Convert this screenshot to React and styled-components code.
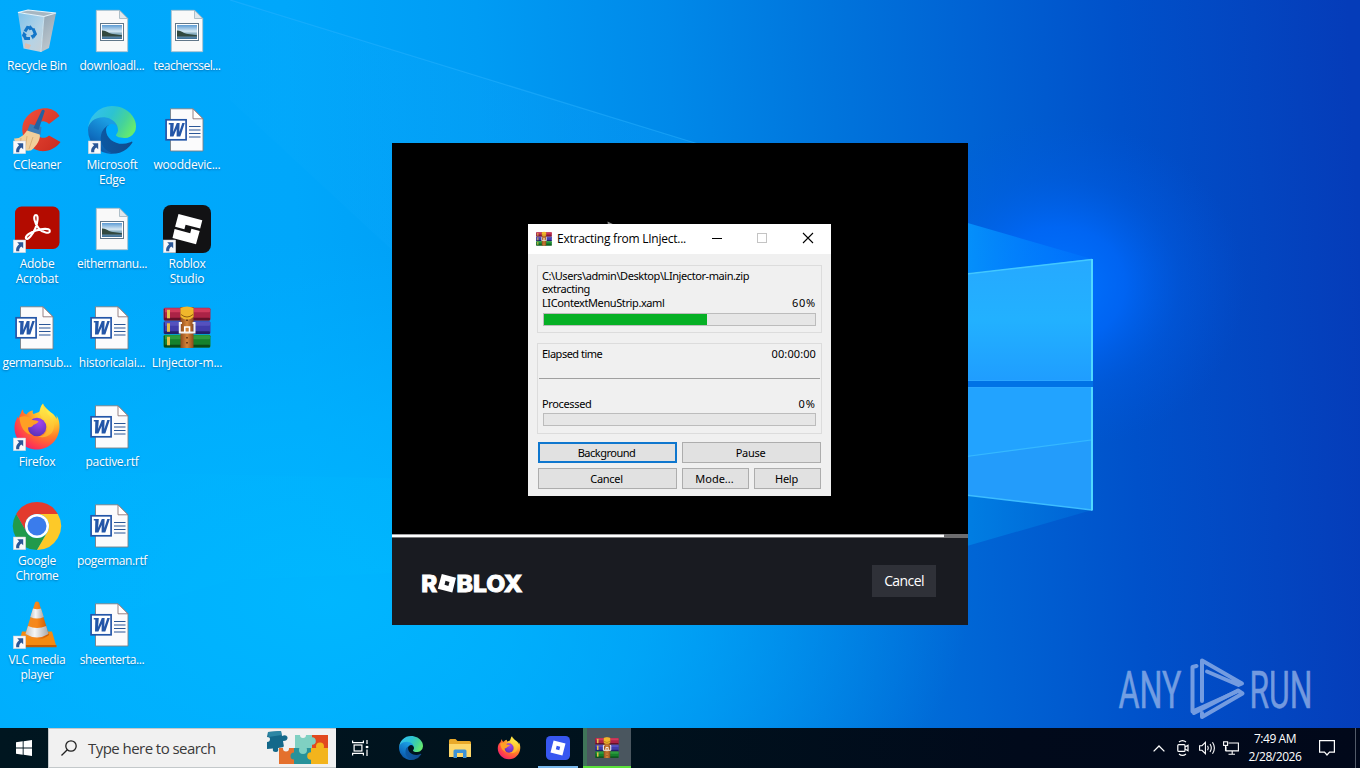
import React from "react";
import styled, { createGlobalStyle, css } from "styled-components";

const GlobalStyle = createGlobalStyle`
  *, *::before, *::after { box-sizing: border-box; }
  html, body { margin: 0; padding: 0; overflow: hidden; }
  body { font-family: "Open Sans", "Noto Sans", sans-serif; font-size: 12px; color: #000; }
  svg { display: block; overflow: visible; }
  button { font: inherit; color: inherit; padding: 0; margin: 0; cursor: default; }
`;

/* ---------- page ---------- */

const Screen = styled.div`
  position: relative;
  display: flex;
  flex-direction: column;
  width: 1360px;
  height: 768px;
  overflow: hidden;
  background: #00aafc;
`;

const WallpaperLayer = styled.svg`
  position: absolute;
  top: 0;
  left: 0;
`;

const Desktop = styled.main`
  position: relative;
  flex: 1;
  min-height: 0;
`;

/* ---------- desktop shortcuts ---------- */

const ShortcutColumns = styled.div`
  display: flex;
  gap: 1px;
`;

const ShortcutColumn = styled.div`
  display: flex;
  flex-direction: column;
`;

const ShortcutCell = styled.div`
  display: flex;
  flex-direction: column;
  align-items: center;
  width: 74px;
  height: 99px;
  padding-top: 7px;
`;

const IconFrame = styled.div`
  width: 48px;
  height: 48px;
  margin-bottom: 3px;
`;

const ShortcutLine = styled.span`
  height: 15px;
  line-height: 15px;
  font-size: 12px;
  letter-spacing: ${(p) => p.$track ?? -0.1}px;
  white-space: nowrap;
  color: #fff;
  text-shadow: 0 1px 2px rgba(0, 30, 80, 0.45);
`;

/* ---------- installer window ---------- */

const InstallerWindow = styled.section`
  position: absolute;
  left: 392px;
  top: 143px;
  display: flex;
  flex-direction: column;
  width: 576px;
  height: 482px;
  background: #000;
`;

const InstallerStage = styled.div`
  flex: 1;
`;

const CursorTip = styled.svg`
  position: absolute;
  left: 215px;
  top: 78px;
`;

const InstallerProgress = styled.div`
  height: 4px;
  padding: 1px 0;
  background: #6d6d6f;
`;

const InstallerProgressFill = styled.div`
  height: 2px;
  background: #fff;
  box-shadow: 0 -1px 0 #a2a2a4, 0 1px 0 #77787a;
`;

const InstallerFooter = styled.footer`
  display: flex;
  justify-content: space-between;
  align-items: flex-start;
  height: 87px;
  padding: 27px 32px 0 30px;
  background: #191b21;
`;

const WordmarkFrame = styled.div`
  padding-top: 9px;
`;

const InstallerButton = styled.button`
  width: 64px;
  height: 32px;
  border: 0;
  background: #2f3138;
  color: #fff;
  font-size: 14px;
  line-height: 32px;
  letter-spacing: -0.6px;
`;

/* ---------- extraction dialog ---------- */

const Dialog = styled.section`
  position: absolute;
  left: 528px;
  top: 224px;
  display: flex;
  flex-direction: column;
  width: 303px;
  height: 272px;
  background: #f0f0f0;
  font-family: "Noto Sans", "Open Sans", sans-serif;
`;

const TitleBar = styled.header`
  display: flex;
  align-items: center;
  height: 30px;
  padding-left: 8px;
  background: #fff;
`;

const DialogTitle = styled.h1`
  flex: 1;
  margin: 0 0 0 5px;
  font-family: "Open Sans", sans-serif;
  font-size: 12px;
  font-weight: 400;
  line-height: 30px;
  white-space: nowrap;
  letter-spacing: -0.25px;
`;

const CaptionButton = styled.button`
  display: flex;
  align-items: center;
  justify-content: center;
  width: 46px;
  height: 30px;
  border: 0;
  background: transparent;
`;

const DialogBody = styled.div`
  display: flex;
  flex-direction: column;
  padding: 11px 9px 0;
`;

const Group = styled.div`
  display: flex;
  flex-direction: column;
  border: 1px solid #dcdcdc;
  height: ${(p) => p.$height}px;
  margin-bottom: ${(p) => p.$after}px;
  padding: ${(p) => p.$top}px 5px 0 4px;
`;

const TextRow = styled.div`
  display: flex;
  justify-content: space-between;
  height: ${(p) => p.$height || 13}px;
  font-size: 11px;
  line-height: 14px;
  white-space: nowrap;
  letter-spacing: ${(p) => p.$track ?? -0.4}px;
`;

const Figure = styled.span`
  letter-spacing: ${(p) => p.$track ?? 0.2}px;
`;

const Meter = styled.div`
  height: 13px;
  margin: ${(p) => p.$gap}px 0 0 1px;
  border: 1px solid #bcbcbc;
  background: #e6e6e6;
`;

const MeterFill = styled.div`
  height: 11px;
  background: #06b025;
`;

const Rule = styled.div`
  height: 1px;
  margin: 17px -4px 18px -3px;
  background: #a0a0a0;
`;

const ButtonRow = styled.div`
  display: flex;
  gap: 5px;
  margin: 0 1px 5px;
`;

const DialogButton = styled.button`
  width: ${(p) => p.$width}px;
  height: 21px;
  border: 1px solid #adadad;
  background: #e1e1e1;
  font-size: 11px;
  line-height: 18px;
  padding: 1px 2px 0 0;
  letter-spacing: ${(p) => p.$track ?? -0.3}px;
  ${(p) =>
    p.$focused &&
    css`
      border: 2px solid #0f77ce;
      line-height: 16px;
    `}
`;

/* ---------- watermark ---------- */

const Watermark = styled.svg`
  position: absolute;
  left: 1110px;
  top: 650px;
`;

/* ---------- taskbar ---------- */

const Taskbar = styled.nav`
  position: relative;
  display: flex;
  height: 40px;
  background: linear-gradient(90deg, #001620 0%, #00121d 45%, #010a1b 75%, #01081a 100%);
  color: #fff;
`;

const TaskButton = styled.button`
  display: flex;
  align-items: center;
  justify-content: center;
  width: ${(p) => p.$width || 49}px;
  height: 40px;
  margin-right: ${(p) => p.$after || 0}px;
  border: 0;
  background: transparent;
  ${(p) =>
    p.$state === "running" &&
    css`
      box-shadow: inset 0 -2px 0 #78b8ec;
      width: 40px;
      margin: 0 5px 0 5px;
    `}
  ${(p) =>
    p.$state === "loading" &&
    css`
      background: linear-gradient(90deg, #3f7559 0 4px, #4a565f 4px);
      box-shadow: inset 0 -2px 0 #5be23b;
    `}
`;

const SearchBox = styled.div`
  display: flex;
  align-items: center;
  width: 288px;
  height: 40px;
  padding: 0 7px 0 12px;
  border: 1px solid #c3c8ca;
  border-width: 1px 0 1px 1px;
  background: #f1f1f1;
  color: #3a3a3a;
`;

const SearchText = styled.span`
  flex: 1;
  margin-left: 11px;
  font-size: 15px;
  letter-spacing: -0.55px;
  white-space: nowrap;
`;

const Tray = styled.div`
  display: flex;
  align-items: center;
  margin-left: auto;
`;

const TrayIcon = styled.div`
  display: flex;
  align-items: center;
  justify-content: center;
  width: 24px;
  height: 40px;
`;

const Clock = styled.div`
  display: flex;
  flex-direction: column;
  align-items: center;
  width: 64px;
  font-size: 12px;
  line-height: 18px;
  letter-spacing: -0.45px;
  white-space: nowrap;
`;

const Notifications = styled.div`
  display: flex;
  align-items: center;
  justify-content: center;
  width: 40px;
  margin-right: 8px;
`;

const ShowDesktop = styled.div`
  width: 5px;
  height: 40px;
  border-left: 1px solid #535b69;
`;

/* ---------- wallpaper ---------- */

function Wallpaper() {
  return (
    <WallpaperLayer width="1360" height="768" viewBox="0 0 1360 768">
      <defs>
        <linearGradient id="wpBase" gradientUnits="userSpaceOnUse" x1="0" y1="330" x2="1360" y2="270">
          <stop offset="0" stopColor="#00aafc" />
          <stop offset="0.22" stopColor="#00a7fb" />
          <stop offset="0.36" stopColor="#009cf4" />
          <stop offset="0.5" stopColor="#0089e9" />
          <stop offset="0.62" stopColor="#0074dc" />
          <stop offset="0.72" stopColor="#0063d4" />
          <stop offset="0.83" stopColor="#0051ca" />
          <stop offset="0.93" stopColor="#0345c0" />
          <stop offset="1" stopColor="#053cb9" />
        </linearGradient>
        <radialGradient id="wpLow" gradientUnits="userSpaceOnUse" cx="0" cy="0" r="1" gradientTransform="translate(330 600) scale(640 360)">
          <stop offset="0" stopColor="#00b8ff" stopOpacity="0.9" />
          <stop offset="0.5" stopColor="#00b4ff" stopOpacity="0.6" />
          <stop offset="1" stopColor="#00b0ff" stopOpacity="0" />
        </radialGradient>
        <radialGradient id="wpGlow" gradientUnits="userSpaceOnUse" cx="0" cy="0" r="1" gradientTransform="translate(1060 285) scale(185 165)">
          <stop offset="0" stopColor="#0074ff" />
          <stop offset="0.35" stopColor="#006aff" stopOpacity="0.75" />
          <stop offset="0.65" stopColor="#005feb" stopOpacity="0.35" />
          <stop offset="1" stopColor="#0058e0" stopOpacity="0" />
        </radialGradient>
        <linearGradient id="wpBeam" gradientUnits="userSpaceOnUse" x1="240" y1="0" x2="1090" y2="0">
          <stop offset="0" stopColor="#20b4ff" stopOpacity="0.06" />
          <stop offset="0.5" stopColor="#10a4ff" stopOpacity="0.2" />
          <stop offset="0.86" stopColor="#0596ff" stopOpacity="0.85" />
          <stop offset="1" stopColor="#0078ff" stopOpacity="0.4" />
        </linearGradient>
        <linearGradient id="wpBeamLow" gradientUnits="userSpaceOnUse" x1="0" y1="0" x2="1090" y2="0">
          <stop offset="0" stopColor="#00c0ff" stopOpacity="0" />
          <stop offset="0.35" stopColor="#00c0ff" stopOpacity="0.15" />
          <stop offset="0.88" stopColor="#0088e8" stopOpacity="0.75" />
          <stop offset="1" stopColor="#0070dc" stopOpacity="0.5" />
        </linearGradient>
        <linearGradient id="wpPaneTop" x1="0" y1="0" x2="0" y2="1">
          <stop offset="0" stopColor="#26a9ff" />
          <stop offset="0.5" stopColor="#22b1ff" />
          <stop offset="1" stopColor="#1f9dff" />
        </linearGradient>
      </defs>
      <rect width="1360" height="768" fill="url(#wpBase)" />
      <rect width="1360" height="768" fill="url(#wpLow)" />
      <rect x="850" y="80" width="450" height="450" fill="url(#wpGlow)" />
      <path d="M230 0 L695 143 L940 173 L1092 259 L960 274 L392 250 L230 100Z" fill="url(#wpBeam)" opacity="0" />
      <path d="M230 0 L695 143 L940 215 L1092 259 L960 274 L392 250 L230 100Z" fill="url(#wpBeam)" />
      <path d="M230 0 L695 143 L968 223" fill="none" stroke="#2cb4ff" strokeOpacity="0.45" strokeWidth="1.3" />
      <path d="M1092 510 L960 548 L230 580 L0 650 V470 L960 490Z" fill="url(#wpBeamLow)" />
      <path d="M940 277 L1092 259 V381 H940Z" fill="url(#wpPaneTop)" />
      <path d="M940 387 H1092 V510 L940 492Z" fill="#239cfb" />
      <path d="M940 387 H1092 V441 L940 460Z" fill="#22a3ff" />
      <rect x="940" y="381" width="153" height="6" fill="#0072e6" />
      <path d="M940 277 L1092 259.5" stroke="#42c8ff" strokeWidth="1.4" />
      <path d="M940 460 L1091 440" stroke="#36b8ff" strokeWidth="1.2" />
      <path d="M940 492 L1092 510" stroke="#3dbdff" strokeWidth="1.4" />
      <path d="M940 387.5 H1092 M940 380.5 H1092" stroke="#2ba6ff" />
      <path d="M1092 259 V381 M1092 387 V510.5" stroke="#50d8ff" strokeWidth="2" />
    </WallpaperLayer>
  );
}

/* ---------- icons ---------- */

const Svg48 = ({ size = 48, children }) => (
  <svg width={size} height={size} viewBox="0 0 48 48">
    {children}
  </svg>
);

const LinkBadge = () => (
  <g>
    <rect x="0.3" y="35" width="12.4" height="12.7" fill="#f8f9fb" stroke="#c8ccd4" strokeWidth="0.5" />
    <path d="M4.2 37.3 H10.2 V43.3 L8.3 41.5 C6.5 43 6 44.3 6.3 46.2 H3.2 C2.7 43.2 4 41 6.1 39.3Z" fill="#2b5797" />
  </g>
);

const RecycleBin = () => (
  <Svg48>
    <defs>
      <linearGradient id="binL" x1="0" y1="0" x2="1" y2="1">
        <stop offset="0" stopColor="#7fc2ea" />
        <stop offset="0.6" stopColor="#b4d3e6" />
        <stop offset="1" stopColor="#c9cfd4" />
      </linearGradient>
      <linearGradient id="binR" x1="0" y1="0" x2="0.4" y2="1">
        <stop offset="0" stopColor="#8ea3b3" />
        <stop offset="1" stopColor="#bfc8ce" />
      </linearGradient>
    </defs>
    <path d="M5 6 L31 9 L28 45 L10.5 41.5Z" fill="url(#binL)" />
    <path d="M31 9 L43 6 L36 41 L28 45Z" fill="url(#binR)" />
    <path d="M5 5.5 L15 3 L43 6 L31 9.5Z" fill="#a7b7c2" />
    <path d="M5 5.5 L15 3 L43 6 L31 9.5Z" fill="none" stroke="#e6f3fa" strokeWidth="1.2" />
    <path d="M31 9 L28 45" stroke="#dce9f0" strokeWidth="0.8" />
    <path d="M12 36 l6 2 -2 4 -4 -1z" fill="#efb79a" opacity="0.7" />
    <g fill="none" stroke="#1476c8" strokeWidth="3.1">
      <path d="M12 24.5 L14.5 20.5 L18 21" />
      <path d="M20 21.5 L22.3 27 L20 30" />
      <path d="M17 31.5 H12.5 L10.5 27" />
    </g>
    <path d="M17 18 l4 4.2 -5 1z M22 27 l-2 5.5 -2.5 -4z M9 29.5 l1.5 -5 3.5 3.5z" fill="#1476c8" />
  </Svg48>
);

const PictureFile = () => (
  <Svg48>
    <defs>
      <linearGradient id="picSky" x1="0" y1="0" x2="0" y2="1">
        <stop offset="0" stopColor="#5c9bd4" />
        <stop offset="0.45" stopColor="#d6e8f3" />
        <stop offset="0.6" stopColor="#8fb3c4" />
        <stop offset="1" stopColor="#3b6c94" />
      </linearGradient>
    </defs>
    <path d="M8.3 3.3 H31.5 L39.7 11.5 V44.7 H8.3Z" fill="#f9f9f9" stroke="#a9bac4" strokeWidth="0.8" />
    <path d="M31.5 3.3 V11.5 H39.7Z" fill="#dfe7ec" stroke="#9eb2be" strokeWidth="0.8" />
    <rect x="12.5" y="16.5" width="23" height="17" fill="#fff" stroke="#61778a" />
    <rect x="14" y="18" width="20" height="14" fill="url(#picSky)" />
    <path d="M14 23.5 C18 23 20 26.5 25 27 L34 28.3 V29.5 H14Z" fill="#32493f" />
  </Svg48>
);

const WordFile = () => (
  <Svg48>
    <path d="M7.5 2.8 H30 L40 12.8 V45 H7.5Z" fill="#fbfbfc" stroke="#7b7f86" strokeWidth="0.9" />
    <path d="M30 2.8 V12.8 H40Z" fill="#fff" stroke="#8a7477" strokeWidth="0.9" />
    <g stroke="#2b5797" strokeWidth="1.1">
      <path d="M26 20.5 H37.5 M26 24 H37.5 M26 27.5 H37.5 M26 31 H37.5" />
    </g>
    <rect x="3.1" y="13.8" width="20" height="20" fill="#fff" stroke="#2456a8" strokeWidth="1.7" />
    <path d="M5.8 17 H10.8 L10.1 26 L13.8 17 H16.6 L16.3 26 L19.3 17 H21.8 L17.3 30.5 H13.6 L13.7 23 L10.4 30.5 H7 L7.3 18.5 H5.8Z" fill="#2456a8" />
  </Svg48>
);

const CCleaner = () => (
  <Svg48>
    <defs>
      <linearGradient id="ccRed" x1="0" y1="0" x2="1" y2="1">
        <stop offset="0" stopColor="#f0503c" />
        <stop offset="1" stopColor="#c92a1e" />
      </linearGradient>
    </defs>
    <path d="M46.5 10 C43 4 36 1.500 29 2.500 C19 4 11 11 9.500 20 A22 22 0 0 0 27 45 C36 46 43 42 47.500 36 L36 29.500 C31 34.500 23 31 22.500 24 C22.500 16 30.500 12.500 36 18Z" fill="url(#ccRed)" />
    <path d="M17 18 L28.5 21 L27.5 29 L14 25.5Z" fill="#3d7db5" />
    <path d="M29 4 q1.8 -1 2.8 1 L25.5 24 L20.5 22Z" fill="#2561a0" />
    <path d="M14 24.5 L26.7 28.5 C28 32 24 40 18 44.5 C9 45.500 3 41 1 32.500 C7 33 11 29 14 24.500Z" fill="#f1cf9b" />
    <path d="M8 32 L7 41 M14 30 L12 44 M20 31 L16 43" stroke="#dbb078" strokeWidth="1" fill="none" />
    <LinkBadge />
  </Svg48>
);

const EdgeGlyph = ({ size = 48, linked }) => (
  <Svg48 size={size}>
    <defs>
      <linearGradient id="edgeA" x1="0" y1="0.5" x2="1" y2="0.5">
        <stop offset="0" stopColor="#0c59a4" />
        <stop offset="1" stopColor="#114a8b" />
      </linearGradient>
      <linearGradient id="edgeB" x1="0.7" y1="0.2" x2="0.3" y2="1">
        <stop offset="0" stopColor="#1b9de2" />
        <stop offset="0.6" stopColor="#0f6fc0" />
        <stop offset="1" stopColor="#0a4f9c" />
      </linearGradient>
      <linearGradient id="edgeC" x1="0" y1="0.2" x2="1" y2="0.6">
        <stop offset="0" stopColor="#35c1f1" />
        <stop offset="0.45" stopColor="#2cc3d2" />
        <stop offset="0.75" stopColor="#45d39a" />
        <stop offset="1" stopColor="#66eb6e" />
      </linearGradient>
    </defs>
    <g transform="scale(0.1875) translate(-4.63 -4.92)">
      <path fill="url(#edgeA)" d="M235.68 195.46a93.73 93.73 0 0 1-10.54 4.71 101.87 101.87 0 0 1-35.9 6.46c-47.32 0-88.54-32.55-88.54-74.32A31.48 31.48 0 0 1 117.13 105c-42.8 1.8-53.8 46.4-53.8 72.53 0 73.88 68.09 81.37 82.76 81.37 7.91 0 19.84-2.3 27-4.56l1.31-.44A128.34 128.34 0 0 0 241 201.1a4 4 0 0 0-5.32-5.64z" />
      <path fill="url(#edgeB)" d="M110.34 246.34A79.2 79.2 0 0 1 87.6 225a80.72 80.72 0 0 1 29.53-120c3.12-1.47 8.45-4.13 15.54-4a32.35 32.35 0 0 1 25.69 13 31.88 31.88 0 0 1 6.36 18.66c0-.21 24.46-79.6-80-79.6-43.9 0-80 41.66-80 78.21a130.15 130.15 0 0 0 12.11 56 128 128 0 0 0 156.38 67.11 75.55 75.55 0 0 1-62.78-8z" />
      <path fill="url(#edgeC)" d="M156.94 153.78c-.81 1.05-3.3 2.5-3.3 5.66 0 2.61 1.7 5.12 4.72 7.23 14.38 10 41.49 8.68 41.56 8.68a59.56 59.56 0 0 0 30.27-8.35A61.38 61.38 0 0 0 260.63 114c.26-22.41-8-37.31-11.34-43.91C228.09 28.76 182.35 5 132.63 5a128 128 0 0 0-128 126.2c.48-36.54 36.8-66.05 80-66.05 3.5 0 23.46.34 42 10.07 16.34 8.58 24.9 18.94 30.85 29.21 6.18 10.67 7.28 24.15 7.28 29.52s-2.74 13.33-7.82 19.83z" />
    </g>
    {linked && <LinkBadge />}
  </Svg48>
);

const Acrobat = () => (
  <Svg48>
    <rect x="2" y="1.5" width="44.5" height="42.5" rx="6.5" fill="#b30b00" />
    <path d="M23 10 C19.6 10 21.3 18.5 26 23.7 C29.5 27.6 36.8 29.4 36.8 26 C36.8 22.7 28.5 23.8 23 25.5 C17.5 27.2 11.8 31 13 33.5 C14.5 36 20 29 22.3 23.5 C24.6 18 25.8 10 23 10Z" fill="none" stroke="#fff" strokeWidth="2.1" />
    <LinkBadge />
  </Svg48>
);

const RobloxStudio = () => (
  <Svg48>
    <rect width="48" height="48" rx="8" fill="#121214" />
    <path d="M15.5 9 L39.3 15.3 L37.2 23.6 L22.6 19.7 L21.4 24.2 L12.1 21.8Z" fill="#fff" />
    <path d="M11.6 24 L27.2 28.2 L28.4 23.8 L36.7 26 L33 39.3 L9.5 33Z" fill="#fff" />
    <LinkBadge />
  </Svg48>
);

const Book = ({ y, light, mid, dark }) => (
  <g>
    <rect x="0.5" y={y} width="47" height="12.8" rx="1.5" fill={mid} />
    <rect x="1" y={y + 0.5} width="46" height="4" rx="1" fill={light} />
    <rect x="1" y={y + 10} width="46" height="2.8" rx="1" fill={dark} />
    <rect x="4" y={y + 2} width="3" height="8.5" fill="#e5c04a" />
    <path d={`M1.5 ${y + 1} v11`} stroke={dark} strokeWidth="0.8" />
  </g>
);

const WinRar = ({ size = 48 }) => (
  <Svg48 size={size}>
    <defs>
      <linearGradient id="rarBelt" x1="0" y1="0" x2="1" y2="0">
        <stop offset="0" stopColor="#8e4b1d" />
        <stop offset="0.5" stopColor="#d8863a" />
        <stop offset="1" stopColor="#8c4a1c" />
      </linearGradient>
    </defs>
    <Book y={3.8} light="#d03a5c" mid="#ab2346" dark="#651029" />
    <Book y={17.3} light="#5551be" mid="#403cab" dark="#22206b" />
    <Book y={30.8} light="#2c9c3e" mid="#15812c" dark="#0a4a19" />
    <rect x="17.5" y="3" width="13" height="41" fill="url(#rarBelt)" />
    <path d="M17.5 4 Q24 1 30.5 4 V13 Q24 18.5 17.5 13Z" fill="#f0b72b" />
    <path d="M18 10.5 Q24 15.5 30 10.5" fill="none" stroke="#93600f" />
    <path d="M24 15.5 v1.5 M24 33 v1.5 M24 38 v1.5" stroke="#53290d" strokeWidth="1.5" />
    <path d="M19 19 H16.8 V28.5 H31.5 V19 H29.5" fill="none" stroke="#f2f2f0" strokeWidth="2" />
    <path d="M21.8 28 V23 H26.5 V28" fill="none" stroke="#fff" strokeWidth="1.6" />
  </Svg48>
);

const FirefoxGlyph = ({ size = 48, linked }) => (
  <Svg48 size={size}>
    <defs>
      <radialGradient id="ffBody" cx="0.8" cy="0.15" r="1.05">
        <stop offset="0" stopColor="#fff24d" />
        <stop offset="0.3" stopColor="#ffc52e" />
        <stop offset="0.55" stopColor="#ff7c28" />
        <stop offset="0.8" stopColor="#ff3c4e" />
        <stop offset="1" stopColor="#e4147c" />
      </radialGradient>
      <radialGradient id="ffCore" cx="0.6" cy="0.25" r="0.8">
        <stop offset="0" stopColor="#a544ee" />
        <stop offset="1" stopColor="#5732b5" />
      </radialGradient>
      <linearGradient id="ffFlame" x1="0" y1="0" x2="0" y2="1">
        <stop offset="0" stopColor="#fff04a" />
        <stop offset="1" stopColor="#ffb02c" />
      </linearGradient>
    </defs>
    <path d="M8 10 C8 8.5 9 7 10 6.5 C10 9 11 11 13.5 11.5 C15 9 18 7.5 20 7.5 C19.5 9 19.5 10 20.5 11 L26 9 C29 6 27.5 3 30 0.5 C31 3.5 34.5 6.5 38 9.5 C41 11 43.5 15 43.5 16 C44 14.5 43.5 12.5 43.3 12 C46 16 46.7 20 46.5 24.5 C46 37 36 46.5 24 46.5 C11 46.5 1.5 36.5 1.5 24.5 C1.5 18.5 4 15.5 5 13 C5.2 15 5.5 15 6 15 C6 13 7 12 8 10Z" fill="url(#ffBody)" />
    <circle cx="24" cy="24" r="9.3" fill="url(#ffCore)" />
    <path d="M29.5 1 C26 6 26 10 28 13 C30.5 16 35 18 34.5 25 C34 30 30 33.5 25 33.5 C32 36 41 32 41 23 C41 15 34 12 31.5 7 C30.5 5 30 3 29.5 1Z" fill="url(#ffFlame)" opacity="0.9" />
    <path d="M6.5 14.5 C11 12 17 14 19.5 17 C22 17.5 25 17.5 25.5 18.5 C25.2 20 22 21.5 20.5 21.8 C19.5 24 17 24.5 15.3 24.3 C14.5 28 17 31 19 32 C12 31 7 24 6.5 14.5Z" fill="#ff9f24" />
    {linked && <LinkBadge />}
  </Svg48>
);

const Chrome = () => (
  <Svg48>
    <path d="M3.2 12 A24 24 0 0 0 24 48 L34.4 30 A12 12 0 0 1 13.6 30Z" fill="#219a4b" />
    <path d="M24 48 A24 24 0 0 0 44.8 12 H24 A12 12 0 0 1 34.4 30Z" fill="#fdc928" />
    <path d="M3.2 12 A24 24 0 0 1 44.8 12 H24 A12 12 0 0 0 13.6 30Z" fill="#e33b2e" />
    <circle cx="24" cy="24" r="12" fill="#fff" />
    <circle cx="24" cy="24" r="9.5" fill="#3a7cec" />
    <LinkBadge />
  </Svg48>
);

const Vlc = () => (
  <Svg48>
    <defs>
      <linearGradient id="vlcO" x1="0" y1="0" x2="1" y2="0">
        <stop offset="0" stopColor="#f08a20" />
        <stop offset="0.5" stopColor="#f7871a" />
        <stop offset="1" stopColor="#c95600" />
      </linearGradient>
      <linearGradient id="vlcW" x1="0" y1="0" x2="1" y2="0">
        <stop offset="0" stopColor="#c4c4c4" />
        <stop offset="0.4" stopColor="#f6f6f6" />
        <stop offset="1" stopColor="#a8a8a8" />
      </linearGradient>
    </defs>
    <path d="M9 30.5 H39 L43.5 46 H5Z" fill="#f58a10" />
    <path d="M5 44 H43.5 V46.3 H5Z" fill="#c55c00" />
    <path d="M22 1.5 Q24 -0.5 26 1.5 L36 34 Q24 43 12 34Z" fill="url(#vlcO)" />
    <path d="M20 7.5 Q24 9 28 7.5 L30.8 16 Q24 19 17.3 16Z" fill="url(#vlcW)" />
    <path d="M15 25 Q24 29 33.2 25 L35.5 33 Q24 40 12.5 33Z" fill="url(#vlcW)" />
    <LinkBadge />
  </Svg48>
);

const FolderGlyph = () => (
  <svg width="22" height="19" viewBox="0 0 22 19">
    <path d="M0 1.5 Q0 0 1.5 0 H6.5 L8.5 2 H20.5 Q22 2 22 3.5 V18 H0Z" fill="#e9a92a" />
    <path d="M0 5 H22 V18 H0Z" fill="#fed76a" />
    <path d="M4.5 19 V12 Q4.5 10.5 6 10.5 H16 Q17.5 10.5 17.5 12 V19 H14 V14 H8 V19Z" fill="#3b92d8" />
  </svg>
);

const RobloxTile = () => (
  <svg width="24" height="24" viewBox="0 0 24 24">
    <rect width="24" height="24" rx="4.5" fill="#3757f0" />
    <path fillRule="evenodd" d="M7.6 4.5 L19.5 7.6 L16.4 19.5 L4.5 16.4Z M10.7 9.8 L9.8 13.3 L13.3 14.2 L14.2 10.7Z" fill="#fff" />
  </svg>
);

const WindowsGlyph = () => (
  <svg width="16" height="16" viewBox="0 0 16 16" fill="#fff">
    <path d="M0 2.3 L6.7 1.3 V7.6 H0Z M7.6 1.2 L16 0 V7.6 H7.6Z M0 8.4 H6.7 V14.7 L0 13.7Z M7.6 8.4 H16 V16 L7.6 14.8Z" />
  </svg>
);

const SearchGlyph = () => (
  <svg width="16" height="16" viewBox="0 0 16 16" fill="none" stroke="#222" strokeWidth="1.3">
    <circle cx="10" cy="6" r="5.2" />
    <path d="M6.3 9.7 L0.5 15.5" />
  </svg>
);

const TaskViewGlyph = () => (
  <svg width="17" height="16" viewBox="0 0 17 16" fill="none" stroke="#fff" strokeWidth="1.2">
    <path d="M0.6 0.5 V2.6 H11.4 V0.5 M0.6 15.5 V13.4 H11.4 V15.5" />
    <rect x="2.1" y="5" width="7.8" height="6" />
    <path d="M15 0 V4 M15 9.5 V16" />
    <path d="M13.8 7 H16.3" strokeWidth="2.2" />
  </svg>
);

const PuzzleArt = () => (
  <svg width="63" height="36" viewBox="0 0 63 36">
    <path d="M2 2 L15 1 L16 6 Q20 4 21.5 7 Q22 11 17 11 L18 17 L12 18 Q13 22 10 22 Q6 22 7 18.5 L1 19 L1 12 Q4 12 4 9 Q4 7 1 7Z" fill="#13688a" />
    <path d="M2 2 L15 1 L15.5 5 L2.5 7Z" fill="#2c86a4" />
    <rect x="13" y="18" width="16" height="16" fill="#e4702d" />
    <rect x="29" y="5" width="17" height="14" fill="#7fd0c2" />
    <rect x="46" y="5" width="16" height="14" fill="#e2491f" />
    <rect x="28" y="18" width="18" height="16" fill="#28929a" />
    <rect x="45" y="18" width="17" height="16" fill="#f3b41c" />
    <circle cx="37" cy="20" r="4" fill="#7fd0c2" />
    <circle cx="46" cy="11" r="3.8" fill="#7fd0c2" />
    <circle cx="54" cy="16.5" r="4" fill="#f3b41c" />
    <circle cx="45" cy="26" r="3.8" fill="#f3b41c" />
    <circle cx="28" cy="26" r="3.5" fill="#28929a" />
    <circle cx="20" cy="18.5" r="3" fill="#f1f1f1" />
    <circle cx="37" cy="5" r="3" fill="#f1f1f1" />
  </svg>
);

const ChevronUp = () => (
  <svg width="12" height="7" viewBox="0 0 12 7" fill="none" stroke="#fff" strokeWidth="1.3">
    <path d="M0.6 6.4 L6 1 L11.4 6.4" />
  </svg>
);

const MeetNow = () => (
  <svg width="12" height="16" viewBox="0 0 12 16" fill="none" stroke="#fff" strokeWidth="1.2">
    <rect x="0.8" y="4.6" width="7.2" height="6.8" rx="1" />
    <path d="M8 7 L11 5.3 V10.7 L8 9" />
    <path d="M2 2 Q5.5 -0.8 9 2 M2 14 Q5.5 16.8 9 14" />
  </svg>
);

const Speaker = () => (
  <svg width="17" height="14" viewBox="0 0 17 14" fill="none" stroke="#fff" strokeWidth="1.1">
    <path d="M0.6 4.7 H3 L6.4 1.3 V12.7 L3 9.3 H0.6Z" />
    <path d="M8.6 4.8 Q10 7 8.6 9.2 M11 3 Q13.6 7 11 11 M13.5 1.2 Q17.3 7 13.5 12.8" />
  </svg>
);

const Network = () => (
  <svg width="16" height="14" viewBox="0 0 16 14" fill="none" stroke="#fff" strokeWidth="1.1">
    <path d="M5.5 2 H15.4 V9.9 H3 V5.5 M9.2 9.9 V13 M5.5 13.2 H12" />
    <rect x="0.6" y="0.8" width="4" height="3.6" />
    <path d="M2.5 4.4 V9.9" />
  </svg>
);

const NoticeGlyph = () => (
  <svg width="16" height="16" viewBox="0 0 16 16" fill="none" stroke="#fff" strokeWidth="1.2">
    <path d="M0.6 0.6 H15.4 V12.2 H10.5 L8 15 L5.5 12.2 H0.6Z" />
  </svg>
);

const RobloxWordmark = () => (
  <svg width="102" height="20" viewBox="0 0 102 20" fill="#fff">
    <g fontFamily="Inter, sans-serif" fontWeight="800" fontSize="22.5" stroke="#fff" strokeWidth="0.9">
      <text x="-0.8" y="17.5" textLength="16" lengthAdjust="spacingAndGlyphs">R</text>
      <text x="34.5" y="17.5" textLength="66" lengthAdjust="spacingAndGlyphs">BLOX</text>
    </g>
    <path fillRule="evenodd" d="M19.8 0 L34 3.8 L30.3 18.5 L15.8 14.7Z M23.5 6.8 L22.5 10.8 L26.4 11.9 L27.5 7.9Z" />
  </svg>
);

/* ---------- content ---------- */

const columns = [
  [
    { icon: <RecycleBin />, lines: [["Recycle Bin", -0.25]] },
    { icon: <CCleaner />, lines: [["CCleaner", -0.3]] },
    { icon: <Acrobat />, lines: [["Adobe", -0.3], ["Acrobat", -0.15]] },
    { icon: <WordFile />, lines: [["germansub...", -0.35]] },
    { icon: <FirefoxGlyph linked />, lines: [["Firefox", -0.3]] },
    { icon: <Chrome />, lines: [["Google", -0.2], ["Chrome", -0.3]] },
    { icon: <Vlc />, lines: [["VLC media", -0.2], ["player", -0.3]] },
  ],
  [
    { icon: <PictureFile />, lines: [["downloadl...", -0.25]] },
    { icon: <EdgeGlyph linked />, lines: [["Microsoft", -0.2], ["Edge", -0.3]] },
    { icon: <PictureFile />, lines: [["eithermanu...", -0.4]] },
    { icon: <WordFile />, lines: [["historicalai...", -0.25]] },
    { icon: <WordFile />, lines: [["pactive.rtf", -0.3]] },
    { icon: <WordFile />, lines: [["pogerman.rtf", -0.35]] },
    { icon: <WordFile />, lines: [["sheenterta...", -0.45]] },
  ],
  [
    { icon: <PictureFile />, lines: [["teacherssel...", -0.45]] },
    { icon: <WordFile />, lines: [["wooddevic...", -0.2]] },
    { icon: <RobloxStudio />, lines: [["Roblox", -0.25], ["Studio", -0.2]] },
    { icon: <WinRar />, lines: [["LInjector-m...", -0.2]] },
  ],
];

function Shortcuts() {
  return (
    <ShortcutColumns>
      {columns.map((items, c) => (
        <ShortcutColumn key={c}>
          {items.map((item) => (
            <ShortcutCell key={item.lines[0][0]}>
              <IconFrame>{item.icon}</IconFrame>
              {item.lines.map(([text, track]) => (
                <ShortcutLine key={text} $track={track}>
                  {text}
                </ShortcutLine>
              ))}
            </ShortcutCell>
          ))}
        </ShortcutColumn>
      ))}
    </ShortcutColumns>
  );
}

function Installer() {
  return (
    <InstallerWindow>
      <InstallerStage />
      <CursorTip width="12" height="5" viewBox="0 0 12 5">
        <path d="M0.5 0.5 L10 5 H1Z" fill="#8c8c8c" />
      </CursorTip>
      <InstallerProgress>
        <InstallerProgressFill style={{ width: `${(552 / 576) * 100}%` }} />
      </InstallerProgress>
      <InstallerFooter>
        <WordmarkFrame>
          <RobloxWordmark />
        </WordmarkFrame>
        <InstallerButton>Cancel</InstallerButton>
      </InstallerFooter>
    </InstallerWindow>
  );
}

function ExtractDialog() {
  return (
    <Dialog>
      <TitleBar>
        <WinRar size={16} />
        <DialogTitle>Extracting from LInject...</DialogTitle>
        <CaptionButton>
          <svg width="10" height="10" viewBox="0 0 10 10">
            <path d="M1 4.5 H11" stroke="#000" />
          </svg>
        </CaptionButton>
        <CaptionButton>
          <svg width="10" height="10" viewBox="0 0 10 10">
            <rect x="0.5" y="-0.5" width="9" height="9" fill="none" stroke="#c4c4c4" />
          </svg>
        </CaptionButton>
        <CaptionButton>
          <svg width="10" height="10" viewBox="0 0 10 10">
            <path d="M0 -1 L10 9 M10 -1 L0 9" stroke="#000" strokeWidth="1.1" />
          </svg>
        </CaptionButton>
      </TitleBar>
      <DialogBody>
        <Group $height={68} $after={10} $top={3}>
          <TextRow $track={-0.42}>C:\Users\admin\Desktop\LInjector-main.zip</TextRow>
          <TextRow $height={14}>extracting</TextRow>
          <TextRow $height={14} $track={-0.4}>
            <span>LIContextMenuStrip.xaml</span>
            <Figure $track={0.8}>60%</Figure>
          </TextRow>
          <Meter $gap={3}>
            <MeterFill style={{ width: "60%" }} />
          </Meter>
        </Group>
        <Group $height={91} $after={8} $top={3}>
          <TextRow $height={14} $track={-0.5}>
            <span>Elapsed time</span>
            <Figure $track={0.1}>00:00:00</Figure>
          </TextRow>
          <Rule />
          <TextRow $height={14} $track={-0.35}>
            <span>Processed</span>
            <Figure $track={1}>0%</Figure>
          </TextRow>
          <Meter $gap={2} />
        </Group>
        <ButtonRow>
          <DialogButton $width={139} $track={-0.5} $focused>Background</DialogButton>
          <DialogButton $width={139}>Pause</DialogButton>
        </ButtonRow>
        <ButtonRow>
          <DialogButton $width={139}>Cancel</DialogButton>
          <DialogButton $width={67} $track={0}>Mode...</DialogButton>
          <DialogButton $width={67}>Help</DialogButton>
        </ButtonRow>
      </DialogBody>
    </Dialog>
  );
}

function AnyRunMark() {
  return (
    <Watermark width="210" height="78" viewBox="1110 650 210 78" opacity="0.68">
      <g fill="#a9c2ee" stroke="#a9c2ee" strokeWidth="0.5" fontFamily="Roboto, sans-serif" fontWeight="400" fontSize="51.5">
        <text x="1118.5" y="707.5" textLength="63" lengthAdjust="spacingAndGlyphs">ANY</text>
        <text x="1249.5" y="707.5" textLength="63" lengthAdjust="spacingAndGlyphs">RUN</text>
      </g>
      <g fill="none" stroke="#a9c2ee" strokeWidth="4" strokeLinejoin="round" strokeLinecap="round">
        <path d="M1202 701 V660.5 L1242 683.5 L1238.5 685 L1207 671.5" />
        <path d="M1196.5 666 L1192.5 667 V711.5 L1237 691.5" />
        <path d="M1202 713 V717 L1242.5 693.5 L1238 690.5 L1194 713" />
      </g>
    </Watermark>
  );
}

function BottomBar() {
  return (
    <Taskbar>
      <TaskButton $width={48}>
        <WindowsGlyph />
      </TaskButton>
      <SearchBox>
        <SearchGlyph />
        <SearchText>Type here to search</SearchText>
        <PuzzleArt />
      </SearchBox>
      <TaskButton $width={48} $after={2}>
        <TaskViewGlyph />
      </TaskButton>
      <TaskButton>
        <EdgeGlyph size={24} />
      </TaskButton>
      <TaskButton>
        <FolderGlyph />
      </TaskButton>
      <TaskButton>
        <FirefoxGlyph size={24} />
      </TaskButton>
      <TaskButton $state="running">
        <RobloxTile />
      </TaskButton>
      <TaskButton $state="loading" $width={48}>
        <WinRar size={24} />
      </TaskButton>
      <Tray>
        <TrayIcon>
          <ChevronUp />
        </TrayIcon>
        <TrayIcon>
          <MeetNow />
        </TrayIcon>
        <TrayIcon>
          <Speaker />
        </TrayIcon>
        <TrayIcon>
          <Network />
        </TrayIcon>
        <Clock>
          <span>7:49 AM</span>
          <span>2/28/2026</span>
        </Clock>
        <Notifications>
          <NoticeGlyph />
        </Notifications>
        <ShowDesktop />
      </Tray>
    </Taskbar>
  );
}

export default function App() {
  return (
    <>
      <GlobalStyle />
      <Screen>
        <Wallpaper />
        <Desktop>
          <Shortcuts />
          <Installer />
          <ExtractDialog />
          <AnyRunMark />
        </Desktop>
        <BottomBar />
      </Screen>
    </>
  );
}
